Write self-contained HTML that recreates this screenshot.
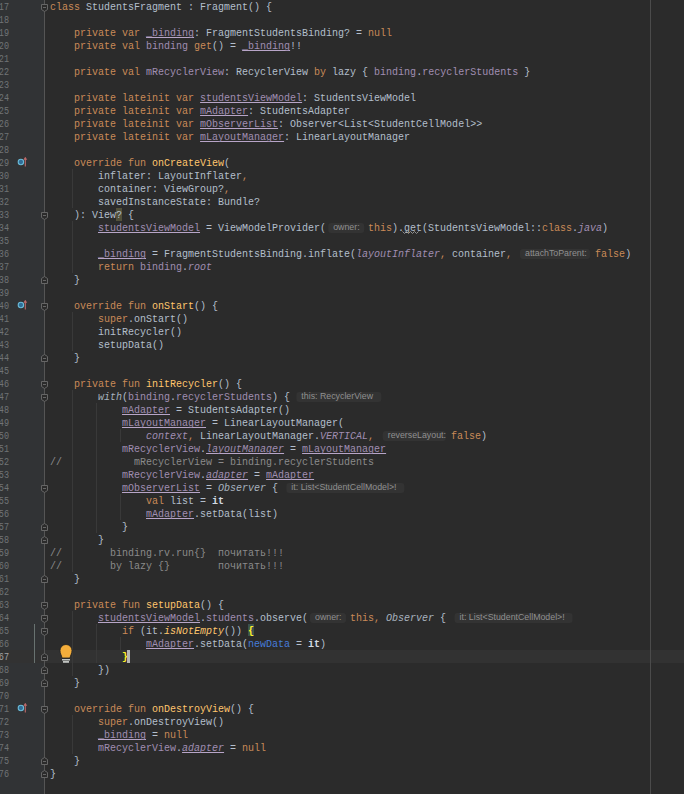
<!DOCTYPE html><html><head><meta charset="utf-8"><style>html,body{margin:0;padding:0;}
body{width:684px;height:794px;background:#2B2B2B;overflow:hidden;position:relative;font-family:"Liberation Mono",monospace;}
.curline{position:absolute;left:0;width:684px;height:13px;background:#323232;}
.l{position:absolute;left:50px;height:13px;line-height:13px;font-size:11px;white-space:pre;color:#B3BFCB;transform:scaleX(0.90909);transform-origin:0 0;padding-top:1px;box-sizing:border-box}
.k{color:#C98A58}
.p{color:#A08EB2}
.pu{color:#A08EB2;text-decoration:underline;text-decoration-color:#B8A5C8;text-underline-offset:1px;text-decoration-skip-ink:none}
.pi{color:#A08EB2;font-style:italic}
.piu{color:#A08EB2;font-style:italic;text-decoration:underline;text-decoration-color:#B8A5C8;text-underline-offset:1px;text-decoration-skip-ink:none}
.f{color:#FFC66D}
.fi{color:#FFC66D;font-style:italic}
.c{color:#8A8A8A}
.i{font-style:italic;color:#A7B2BE}
.it{color:#D2DAE2;font-weight:bold}
.named{color:#467CDA}
.brace{color:#FFEF28;font-weight:bold}
.wq{}
.wqbg{position:absolute;left:116px;top:208px;width:6px;height:13px;background:#52503A}
.brace2{color:#FFEF28;font-weight:bold}
.warn{text-decoration:underline wavy #BC3F3C;}
.hint{display:inline-block;height:13px;vertical-align:top;position:relative}
.hb{position:absolute;top:1px;height:10px;line-height:9px;box-sizing:border-box;padding:0 0 0 5px;background:#333333;border-radius:3px;color:#909090;font-family:"Liberation Sans",sans-serif;font-size:8.8px;white-space:pre;transform:scaleX(1.1);transform-origin:0 0}
.ln{position:absolute;left:-20px;width:29px;transform:scaleX(0.85);transform-origin:100% 0;text-align:right;height:13px;line-height:13px;font-size:10px;color:#707376;font-family:"Liberation Mono",monospace;padding-top:1px;box-sizing:border-box}
.ln.cur{color:#A4A3A3}
.fold{position:absolute;left:40px;}
.gutter{position:absolute;left:0;top:0;width:44px;height:794px;background:#313335}
.ovr{position:absolute;left:16px;}
.fl{position:absolute;left:44px;top:0;width:1px;height:794px;background:#555}
.margin{position:absolute;left:650px;top:0;width:1px;height:794px;background:#4B4B4B}
.g{position:absolute;width:1px;background:#393939}
.vcs{position:absolute;left:34px;top:624px;width:1px;height:39px;background:#687270}
.caret{position:absolute;left:127px;top:650px;width:3px;height:13px;background:#B5B5B5}
.bbg{position:absolute;left:248px;top:624px;width:6px;height:12px;background:#3B514D}
</style></head><body>
<div class="gutter"></div>
<div class="curline" style="top:650px"></div>
<div class="bbg"></div>
<div class="wqbg"></div>
<div class="fl"></div>
<div class="margin"></div>
<div class="vcs"></div>

<div class="ln" style="top:0px">17</div>
<div class="ln" style="top:13px">18</div>
<div class="ln" style="top:26px">19</div>
<div class="ln" style="top:39px">20</div>
<div class="ln" style="top:52px">21</div>
<div class="ln" style="top:65px">22</div>
<div class="ln" style="top:78px">23</div>
<div class="ln" style="top:91px">24</div>
<div class="ln" style="top:104px">25</div>
<div class="ln" style="top:117px">26</div>
<div class="ln" style="top:130px">27</div>
<div class="ln" style="top:143px">28</div>
<div class="ln" style="top:156px">29</div>
<div class="ln" style="top:169px">30</div>
<div class="ln" style="top:182px">31</div>
<div class="ln" style="top:195px">32</div>
<div class="ln" style="top:208px">33</div>
<div class="ln" style="top:221px">34</div>
<div class="ln" style="top:234px">35</div>
<div class="ln" style="top:247px">36</div>
<div class="ln" style="top:260px">37</div>
<div class="ln" style="top:273px">38</div>
<div class="ln" style="top:286px">39</div>
<div class="ln" style="top:299px">40</div>
<div class="ln" style="top:312px">41</div>
<div class="ln" style="top:325px">42</div>
<div class="ln" style="top:338px">43</div>
<div class="ln" style="top:351px">44</div>
<div class="ln" style="top:364px">45</div>
<div class="ln" style="top:377px">46</div>
<div class="ln" style="top:390px">47</div>
<div class="ln" style="top:403px">48</div>
<div class="ln" style="top:416px">49</div>
<div class="ln" style="top:429px">50</div>
<div class="ln" style="top:442px">51</div>
<div class="ln" style="top:455px">52</div>
<div class="ln" style="top:468px">53</div>
<div class="ln" style="top:481px">54</div>
<div class="ln" style="top:494px">55</div>
<div class="ln" style="top:507px">56</div>
<div class="ln" style="top:520px">57</div>
<div class="ln" style="top:533px">58</div>
<div class="ln" style="top:546px">59</div>
<div class="ln" style="top:559px">60</div>
<div class="ln" style="top:572px">61</div>
<div class="ln" style="top:585px">62</div>
<div class="ln" style="top:598px">63</div>
<div class="ln" style="top:611px">64</div>
<div class="ln" style="top:624px">65</div>
<div class="ln" style="top:637px">66</div>
<div class="ln cur" style="top:650px">67</div>
<div class="ln" style="top:663px">68</div>
<div class="ln" style="top:676px">69</div>
<div class="ln" style="top:689px">70</div>
<div class="ln" style="top:702px">71</div>
<div class="ln" style="top:715px">72</div>
<div class="ln" style="top:728px">73</div>
<div class="ln" style="top:741px">74</div>
<div class="ln" style="top:754px">75</div>
<div class="ln" style="top:767px">76</div>
<svg class="fold" style="top:0px" width="12" height="13" viewBox="0 0 12 13"><path d="M1.5 4.5 H7.5 V9.5 L4.5 11.5 L1.5 9.5 Z" fill="#2B2B2B" stroke="#666" stroke-width="1"/><path d="M3 7.5 H6" stroke="#666" stroke-width="1"/></svg>
<svg class="fold" style="top:208px" width="12" height="13" viewBox="0 0 12 13"><path d="M1.5 4.5 H7.5 V9.5 L4.5 11.5 L1.5 9.5 Z" fill="#2B2B2B" stroke="#666" stroke-width="1"/><path d="M3 7.5 H6" stroke="#666" stroke-width="1"/></svg>
<svg class="fold" style="top:299px" width="12" height="13" viewBox="0 0 12 13"><path d="M1.5 4.5 H7.5 V9.5 L4.5 11.5 L1.5 9.5 Z" fill="#2B2B2B" stroke="#666" stroke-width="1"/><path d="M3 7.5 H6" stroke="#666" stroke-width="1"/></svg>
<svg class="fold" style="top:377px" width="12" height="13" viewBox="0 0 12 13"><path d="M1.5 4.5 H7.5 V9.5 L4.5 11.5 L1.5 9.5 Z" fill="#2B2B2B" stroke="#666" stroke-width="1"/><path d="M3 7.5 H6" stroke="#666" stroke-width="1"/></svg>
<svg class="fold" style="top:390px" width="12" height="13" viewBox="0 0 12 13"><path d="M1.5 4.5 H7.5 V9.5 L4.5 11.5 L1.5 9.5 Z" fill="#2B2B2B" stroke="#666" stroke-width="1"/><path d="M3 7.5 H6" stroke="#666" stroke-width="1"/></svg>
<svg class="fold" style="top:481px" width="12" height="13" viewBox="0 0 12 13"><path d="M1.5 4.5 H7.5 V9.5 L4.5 11.5 L1.5 9.5 Z" fill="#2B2B2B" stroke="#666" stroke-width="1"/><path d="M3 7.5 H6" stroke="#666" stroke-width="1"/></svg>
<svg class="fold" style="top:598px" width="12" height="13" viewBox="0 0 12 13"><path d="M1.5 4.5 H7.5 V9.5 L4.5 11.5 L1.5 9.5 Z" fill="#2B2B2B" stroke="#666" stroke-width="1"/><path d="M3 7.5 H6" stroke="#666" stroke-width="1"/></svg>
<svg class="fold" style="top:611px" width="12" height="13" viewBox="0 0 12 13"><path d="M1.5 4.5 H7.5 V9.5 L4.5 11.5 L1.5 9.5 Z" fill="#2B2B2B" stroke="#666" stroke-width="1"/><path d="M3 7.5 H6" stroke="#666" stroke-width="1"/></svg>
<svg class="fold" style="top:624px" width="12" height="13" viewBox="0 0 12 13"><path d="M1.5 4.5 H7.5 V9.5 L4.5 11.5 L1.5 9.5 Z" fill="#2B2B2B" stroke="#666" stroke-width="1"/><path d="M3 7.5 H6" stroke="#666" stroke-width="1"/></svg>
<svg class="fold" style="top:702px" width="12" height="13" viewBox="0 0 12 13"><path d="M1.5 4.5 H7.5 V9.5 L4.5 11.5 L1.5 9.5 Z" fill="#2B2B2B" stroke="#666" stroke-width="1"/><path d="M3 7.5 H6" stroke="#666" stroke-width="1"/></svg>
<svg class="fold" style="top:273px" width="12" height="13" viewBox="0 0 12 13"><path d="M1.5 10.5 H7.5 V5.5 L4.5 3.5 L1.5 5.5 Z" fill="#2B2B2B" stroke="#666" stroke-width="1"/><path d="M3 7.5 H6" stroke="#666" stroke-width="1"/></svg>
<svg class="fold" style="top:351px" width="12" height="13" viewBox="0 0 12 13"><path d="M1.5 10.5 H7.5 V5.5 L4.5 3.5 L1.5 5.5 Z" fill="#2B2B2B" stroke="#666" stroke-width="1"/><path d="M3 7.5 H6" stroke="#666" stroke-width="1"/></svg>
<svg class="fold" style="top:520px" width="12" height="13" viewBox="0 0 12 13"><path d="M1.5 10.5 H7.5 V5.5 L4.5 3.5 L1.5 5.5 Z" fill="#2B2B2B" stroke="#666" stroke-width="1"/><path d="M3 7.5 H6" stroke="#666" stroke-width="1"/></svg>
<svg class="fold" style="top:533px" width="12" height="13" viewBox="0 0 12 13"><path d="M1.5 10.5 H7.5 V5.5 L4.5 3.5 L1.5 5.5 Z" fill="#2B2B2B" stroke="#666" stroke-width="1"/><path d="M3 7.5 H6" stroke="#666" stroke-width="1"/></svg>
<svg class="fold" style="top:572px" width="12" height="13" viewBox="0 0 12 13"><path d="M1.5 10.5 H7.5 V5.5 L4.5 3.5 L1.5 5.5 Z" fill="#2B2B2B" stroke="#666" stroke-width="1"/><path d="M3 7.5 H6" stroke="#666" stroke-width="1"/></svg>
<svg class="fold" style="top:650px" width="12" height="13" viewBox="0 0 12 13"><path d="M1.5 10.5 H7.5 V5.5 L4.5 3.5 L1.5 5.5 Z" fill="#2B2B2B" stroke="#666" stroke-width="1"/><path d="M3 7.5 H6" stroke="#666" stroke-width="1"/></svg>
<svg class="fold" style="top:663px" width="12" height="13" viewBox="0 0 12 13"><path d="M1.5 10.5 H7.5 V5.5 L4.5 3.5 L1.5 5.5 Z" fill="#2B2B2B" stroke="#666" stroke-width="1"/><path d="M3 7.5 H6" stroke="#666" stroke-width="1"/></svg>
<svg class="fold" style="top:676px" width="12" height="13" viewBox="0 0 12 13"><path d="M1.5 10.5 H7.5 V5.5 L4.5 3.5 L1.5 5.5 Z" fill="#2B2B2B" stroke="#666" stroke-width="1"/><path d="M3 7.5 H6" stroke="#666" stroke-width="1"/></svg>
<svg class="fold" style="top:754px" width="12" height="13" viewBox="0 0 12 13"><path d="M1.5 10.5 H7.5 V5.5 L4.5 3.5 L1.5 5.5 Z" fill="#2B2B2B" stroke="#666" stroke-width="1"/><path d="M3 7.5 H6" stroke="#666" stroke-width="1"/></svg>
<svg class="fold" style="top:767px" width="12" height="13" viewBox="0 0 12 13"><path d="M1.5 10.5 H7.5 V5.5 L4.5 3.5 L1.5 5.5 Z" fill="#2B2B2B" stroke="#666" stroke-width="1"/><path d="M3 7.5 H6" stroke="#666" stroke-width="1"/></svg>
<svg class="ovr" style="top:156px" width="14" height="13" viewBox="0 0 14 13"><circle cx="4.9" cy="6" r="2.7" fill="#2F6E98" stroke="#6BBBD8" stroke-width="1.1"/><path d="M9.3 10.6 V2" stroke="#BE6A6A" stroke-width="1.1"/><path d="M7.9 3.6 L9.3 1.2 L10.7 3.6 Z" fill="#BE6A6A" stroke="#BE6A6A" stroke-width="0.6"/></svg>
<svg class="ovr" style="top:299px" width="14" height="13" viewBox="0 0 14 13"><circle cx="4.9" cy="6" r="2.7" fill="#2F6E98" stroke="#6BBBD8" stroke-width="1.1"/><path d="M9.3 10.6 V2" stroke="#BE6A6A" stroke-width="1.1"/><path d="M7.9 3.6 L9.3 1.2 L10.7 3.6 Z" fill="#BE6A6A" stroke="#BE6A6A" stroke-width="0.6"/></svg>
<svg class="ovr" style="top:702px" width="14" height="13" viewBox="0 0 14 13"><circle cx="4.9" cy="6" r="2.7" fill="#2F6E98" stroke="#6BBBD8" stroke-width="1.1"/><path d="M9.3 10.6 V2" stroke="#BE6A6A" stroke-width="1.1"/><path d="M7.9 3.6 L9.3 1.2 L10.7 3.6 Z" fill="#BE6A6A" stroke="#BE6A6A" stroke-width="0.6"/></svg>
<div class="g" style="left:72px;top:169px;height:39px"></div>
<div class="g" style="left:72px;top:221px;height:52px"></div>
<div class="g" style="left:72px;top:312px;height:39px"></div>
<div class="g" style="left:72px;top:390px;height:182px"></div>
<div class="g" style="left:96px;top:403px;height:130px"></div>
<div class="g" style="left:120px;top:429px;height:13px"></div>
<div class="g" style="left:120px;top:494px;height:26px"></div>
<div class="g" style="left:72px;top:611px;height:65px"></div>
<div class="g" style="left:96px;top:624px;height:39px"></div>
<div class="g" style="left:120px;top:637px;height:13px"></div>
<div class="g" style="left:72px;top:715px;height:39px"></div>
<div class="l" style="top:0px"><span class="k">class</span> StudentsFragment : Fragment() {</div>
<div class="l" style="top:26px">    <span class="k">private</span> <span class="k">var</span> <span class="pu">_binding</span>: FragmentStudentsBinding? = <span class="k">null</span></div>
<div class="l" style="top:39px">    <span class="k">private</span> <span class="k">val</span> <span class="p">binding</span> <span class="k">get</span>() = <span class="pu">_binding</span>!!</div>
<div class="l" style="top:65px">    <span class="k">private</span> <span class="k">val</span> <span class="p">mRecyclerView</span>: RecyclerView <span class="k">by</span> lazy { <span class="p">binding</span>.<span class="p">recyclerStudents</span> }</div>
<div class="l" style="top:91px">    <span class="k">private</span> <span class="k">lateinit</span> <span class="k">var</span> <span class="pu">studentsViewModel</span>: StudentsViewModel</div>
<div class="l" style="top:104px">    <span class="k">private</span> <span class="k">lateinit</span> <span class="k">var</span> <span class="pu">mAdapter</span>: StudentsAdapter</div>
<div class="l" style="top:117px">    <span class="k">private</span> <span class="k">lateinit</span> <span class="k">var</span> <span class="pu">mObserverList</span>: Observer&lt;List&lt;StudentCellModel&gt;&gt;</div>
<div class="l" style="top:130px">    <span class="k">private</span> <span class="k">lateinit</span> <span class="k">var</span> <span class="pu">mLayoutManager</span>: LinearLayoutManager</div>
<div class="l" style="top:156px">    <span class="k">override</span> <span class="k">fun</span> <span class="f">onCreateView</span>(</div>
<div class="l" style="top:169px">        inflater: LayoutInflater<span class="k">,</span></div>
<div class="l" style="top:182px">        container: ViewGroup?<span class="k">,</span></div>
<div class="l" style="top:195px">        savedInstanceState: Bundle?</div>
<div class="l" style="top:208px">    ): View<span class="wq">?</span> {</div>
<div class="l" style="top:221px">        <span class="pu">studentsViewModel</span> = ViewModelProvider(<span class="hint" style="width:46.200px"><span class="hb" style="left:2.200px;width:36px">owner:</span></span><span class="k">this</span>).get(StudentsViewModel::<span class="k">class</span>.<span class="pi">java</span>)</div>
<div class="l" style="top:247px">        <span class="pu">_binding</span> = FragmentStudentsBinding.inflate(<span class="pi">layoutInflater</span><span class="k">,</span> container<span class="k">,</span> <span class="hint" style="width:84.700px"><span class="hb" style="left:2.200px;width:70px">attachToParent:</span></span><span class="k">false</span>)</div>
<div class="l" style="top:260px">        <span class="k">return</span> <span class="p">binding</span>.<span class="pi">root</span></div>
<div class="l" style="top:273px">    }</div>
<div class="l" style="top:299px">    <span class="k">override</span> <span class="k">fun</span> <span class="f">onStart</span>() {</div>
<div class="l" style="top:312px">        <span class="k">super</span>.onStart()</div>
<div class="l" style="top:325px">        initRecycler()</div>
<div class="l" style="top:338px">        setupData()</div>
<div class="l" style="top:351px">    }</div>
<div class="l" style="top:377px">    <span class="k">private</span> <span class="k">fun</span> <span class="f">initRecycler</span>() {</div>
<div class="l" style="top:390px">        <span class="i">with</span>(<span class="p">binding</span>.<span class="p">recyclerStudents</span>) { <span class="hint"><span class="hb" style="left:0.000px;width:85px">this: RecyclerView</span></span></div>
<div class="l" style="top:403px">            <span class="pu">mAdapter</span> = StudentsAdapter()</div>
<div class="l" style="top:416px">            <span class="pu">mLayoutManager</span> = LinearLayoutManager(</div>
<div class="l" style="top:429px">                <span class="pi">context</span><span class="k">,</span> LinearLayoutManager.<span class="pi">VERTICAL</span><span class="k">,</span> <span class="hint" style="width:78.100px"><span class="hb" style="left:3.300px;width:63px">reverseLayout:</span></span><span class="k">false</span>)</div>
<div class="l" style="top:442px">            <span class="p">mRecyclerView</span>.<span class="piu">layoutManager</span> = <span class="pu">mLayoutManager</span></div>
<div class="l" style="top:455px"><span class="c">//            mRecyclerView = binding.recyclerStudents</span></div>
<div class="l" style="top:468px">            <span class="p">mRecyclerView</span>.<span class="piu">adapter</span> = <span class="pu">mAdapter</span></div>
<div class="l" style="top:481px">            <span class="pu">mObserverList</span> = <span class="i">Observer</span> { <span class="hint"><span class="hb" style="left:2.200px;width:118px">it: List&lt;StudentCellModel&gt;!</span></span></div>
<div class="l" style="top:494px">                <span class="k">val</span> list = <span class="it">it</span></div>
<div class="l" style="top:507px">                <span class="pu">mAdapter</span>.setData(list)</div>
<div class="l" style="top:520px">            }</div>
<div class="l" style="top:533px">        }</div>
<div class="l" style="top:546px"><span class="c">//        binding.rv.run{}  почитать!!!</span></div>
<div class="l" style="top:559px"><span class="c">//        by lazy {}        почитать!!!</span></div>
<div class="l" style="top:572px">    }</div>
<div class="l" style="top:598px">    <span class="k">private</span> <span class="k">fun</span> <span class="f">setupData</span>() {</div>
<div class="l" style="top:611px">        <span class="pu">studentsViewModel</span>.<span class="p">students</span>.observe(<span class="hint" style="width:46.200px"><span class="hb" style="left:2.200px;width:36px">owner:</span></span><span class="k">this</span><span class="k">,</span> <span class="i">Observer</span> { <span class="hint"><span class="hb" style="left:2.200px;width:118px">it: List&lt;StudentCellModel&gt;!</span></span></div>
<div class="l" style="top:624px">            <span class="k">if</span> (it.<span class="fi">isNotEmpty</span>()) <span class="brace">{</span></div>
<div class="l" style="top:637px">                <span class="pu">mAdapter</span>.setData(<span class="named">newData</span> = <span class="it">it</span>)</div>
<div class="l" style="top:650px">            <span class="brace2">}</span></div>
<div class="l" style="top:663px">        })</div>
<div class="l" style="top:676px">    }</div>
<div class="l" style="top:702px">    <span class="k">override</span> <span class="k">fun</span> <span class="f">onDestroyView</span>() {</div>
<div class="l" style="top:715px">        <span class="k">super</span>.onDestroyView()</div>
<div class="l" style="top:728px">        <span class="pu">_binding</span> = <span class="k">null</span></div>
<div class="l" style="top:741px">        <span class="p">mRecyclerView</span>.<span class="piu">adapter</span> = <span class="k">null</span></div>
<div class="l" style="top:754px">    }</div>
<div class="l" style="top:767px">}</div>
<div class="caret"></div>
<svg style="position:absolute;left:54px;top:640px" width="24" height="26" viewBox="0 0 24 26"><path d="M6 10.5 A6 6 0 1 1 18 10.5 C18 13.5 16.5 15 16 18 H8 C7.5 15 6 13.5 6 10.5 Z" fill="#F4AE3B" stroke="#1F1F1F" stroke-width="0.8"/><rect x="8" y="19" width="8" height="1.5" fill="#C0C3C0"/><rect x="9" y="21" width="6" height="1.8" fill="#C0C3C0"/></svg>
<svg style="position:absolute;left:402px;top:230px" width="18" height="5" viewBox="0 0 18 5"><path d="M0.5 1.5 L2.5 3.5 L4.5 1.5 L6.5 3.5 L8.5 1.5 L10.5 3.5 L12.5 1.5 L14.5 3.5 L16.5 1.5" fill="none" stroke="#9A9A9A" stroke-width="0.9"/></svg>

</body></html>
